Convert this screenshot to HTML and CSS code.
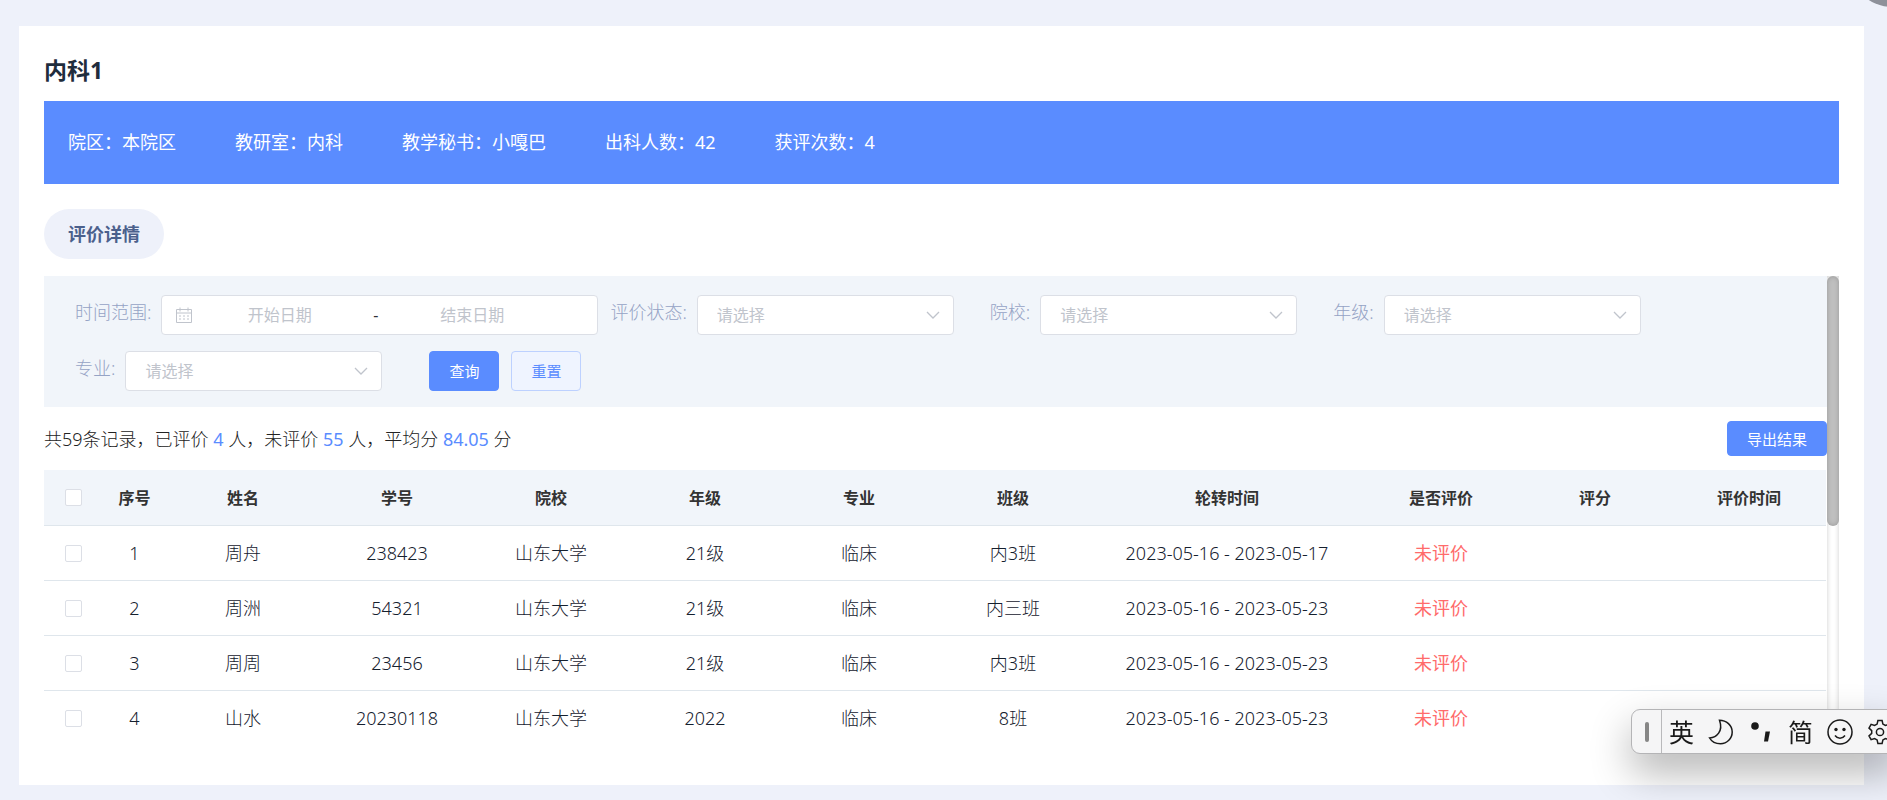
FILE: index.html
```html
<!DOCTYPE html>
<html lang="zh-CN">
<head>
<meta charset="utf-8">
<meta name="viewport" content="width=device-width, initial-scale=1">
<title>内科1</title>
<link rel="stylesheet" href="styles.css">
</head>
<body>
<main class="card">
  <h1 class="title">内科1</h1>
  <section class="banner">
    <span>院区：本院区</span>
    <span>教研室：内科</span>
    <span>教学秘书：小嘎巴</span>
    <span>出科人数：42</span>
    <span>获评次数：4</span>
  </section>
  <button class="tab" type="button">评价详情</button>

  <div class="scroll">
    <div class="scroll-view">
      <form class="filters">
        <div class="field field-range">
          <label for="start">时间范围:</label>
          <div class="range">
            <svg class="icon-date" viewBox="0 0 16 16" aria-hidden="true">
              <path d="M.5 2.5h15v13H.5zM.5 6h15M4 .5v4M12 .5v4"/>
              <path d="M3 9h2M7 9h2M11 9h2M3 12h2M7 12h2M11 12h2"/>
            </svg>
            <input id="start" type="text" placeholder="开始日期">
            <span class="range-sep">-</span>
            <input type="text" placeholder="结束日期" aria-label="结束日期">
          </div>
        </div>
        <div class="field">
          <label for="status">评价状态:</label>
          <div class="select">
            <select id="status"><option>请选择</option></select>
            <svg viewBox="0 0 14 8" aria-hidden="true"><path d="M1 1l6 6 6-6"/></svg>
          </div>
        </div>
        <div class="field">
          <label for="school">院校:</label>
          <div class="select">
            <select id="school"><option>请选择</option></select>
            <svg viewBox="0 0 14 8" aria-hidden="true"><path d="M1 1l6 6 6-6"/></svg>
          </div>
        </div>
        <div class="field">
          <label for="grade">年级:</label>
          <div class="select">
            <select id="grade"><option>请选择</option></select>
            <svg viewBox="0 0 14 8" aria-hidden="true"><path d="M1 1l6 6 6-6"/></svg>
          </div>
        </div>
        <div class="field">
          <label for="major">专业:</label>
          <div class="select">
            <select id="major"><option>请选择</option></select>
            <svg viewBox="0 0 14 8" aria-hidden="true"><path d="M1 1l6 6 6-6"/></svg>
          </div>
        </div>
        <div class="actions">
          <button class="btn btn-primary" type="button">查询</button>
          <button class="btn btn-plain" type="button">重置</button>
        </div>
      </form>

      <div class="summary">
        <p>共59条记录，已评价 <b>4</b> 人，未评价 <b>55</b> 人，平均分 <b>84.05</b> 分</p>
        <button class="btn btn-primary btn-export" type="button">导出结果</button>
      </div>

      <table class="table">
        <colgroup>
          <col class="col-check"><col class="col-index"><col><col><col><col><col><col><col class="col-time"><col><col><col>
        </colgroup>
        <thead>
          <tr><th><input type="checkbox" aria-label="全选"></th><th>序号</th><th>姓名</th><th>学号</th><th>院校</th><th>年级</th><th>专业</th><th>班级</th><th>轮转时间</th><th>是否评价</th><th>评分</th><th>评价时间</th></tr>
        </thead>
        <tbody>
          <tr><td><input type="checkbox" aria-label="选择 1"></td><td>1</td><td>周舟</td><td>238423</td><td>山东大学</td><td>21级</td><td>临床</td><td>内3班</td><td>2023-05-16 - 2023-05-17</td><td class="pending">未评价</td><td></td><td></td></tr>
          <tr><td><input type="checkbox" aria-label="选择 2"></td><td>2</td><td>周洲</td><td>54321</td><td>山东大学</td><td>21级</td><td>临床</td><td>内三班</td><td>2023-05-16 - 2023-05-23</td><td class="pending">未评价</td><td></td><td></td></tr>
          <tr><td><input type="checkbox" aria-label="选择 3"></td><td>3</td><td>周周</td><td>23456</td><td>山东大学</td><td>21级</td><td>临床</td><td>内3班</td><td>2023-05-16 - 2023-05-23</td><td class="pending">未评价</td><td></td><td></td></tr>
          <tr><td><input type="checkbox" aria-label="选择 4"></td><td>4</td><td>山水</td><td>20230118</td><td>山东大学</td><td>2022</td><td>临床</td><td>8班</td><td>2023-05-16 - 2023-05-23</td><td class="pending">未评价</td><td></td><td></td></tr>
        </tbody>
      </table>
    </div>
    <div class="track"><div class="thumb"></div></div>
  </div>
</main>

<div class="corner"></div>

<aside class="ime">
  <div class="ime-grip"><i></i></div>
  <div class="ime-items">
    <span>英</span>
    <svg viewBox="0 0 26 26" aria-hidden="true"><path d="M11.500 1.200C18.500 1.200 24.200 6.500 24.200 13S19 24.800 12.500 24.800C7.800 24.800 3.600 22.500 1.600 19C8.500 18.500 15.500 12.500 11.500 1.200Z"/></svg>
    <svg viewBox="0 0 26 26" aria-hidden="true"><circle class="solid" cx="7" cy="7" r="3.800"/><path class="solid" d="M17.500 12.500h4.500l-2 10h-4z"/></svg>
    <span>简</span>
    <svg viewBox="0 0 26 26" aria-hidden="true"><circle cx="13" cy="13" r="12"/><circle class="solid" cx="9" cy="10.500" r="1.700"/><circle class="solid" cx="17" cy="10.500" r="1.700"/><path d="M8 16.500c2.500 3.500 7.500 3.500 10 0"/></svg>
    <svg viewBox="0 0 26 26" aria-hidden="true"><circle cx="13" cy="13" r="3.600"/><path d="M10.900 1.500h4.200l.8 3.600 2.500 1.400 3.500-1.100 2.100 3.700-2.700 2.500v2.800l2.700 2.500-2.100 3.700-3.500-1.100-2.500 1.400-.8 3.600h-4.200l-.8-3.600-2.500-1.400-3.500 1.100L2 16.900l2.700-2.500v-2.800L2 9.100l2.100-3.700 3.500 1.100 2.500-1.400z"/></svg>
  </div>
</aside>
</body>
</html>
```
FILE: styles.css
```css
* {
  box-sizing: border-box;
}

body {
  margin: 0;
  height: 100vh;
  padding: 26px 23px 15px 19px;
  overflow: hidden;
  background: #eef1fa;
  color: #1f2d3d;
  font: 18px/26px "Noto Sans", "Noto Sans CJK SC", sans-serif;
}

button,
input,
select {
  font: inherit;
}

.card {
  display: flex;
  flex-direction: column;
  height: 100%;
  padding: 24px 25px 42px;
  background: #fff;
}

.title {
  margin: 0 0 11px;
  font-size: 23px;
  line-height: 40px;
}

.banner {
  display: flex;
  gap: 59px;
  padding: 28px 24px;
  background: #5a8cff;
  color: #fff;
  line-height: 27px;
}

.tab {
  align-self: flex-start;
  height: 50px;
  margin: 25px 0 17px;
  padding: 0 24px;
  border: 0;
  border-radius: 25px;
  background: #eef1fa;
  color: #4b608c;
  font-weight: 700;
}

.scroll {
  display: flex;
  flex: 1;
  min-height: 0;
}

.scroll-view {
  flex: 1;
  min-width: 0;
  overflow: hidden;
}

.track {
  width: 12px;
  box-shadow: inset 0 0 5px rgba(0, 0, 0, 0.2);
}

.thumb {
  height: 53.500%;
  border-radius: 6px;
  background: #bfbfbf;
  box-shadow: inset 0 0 5px rgba(0, 0, 0, 0.2);
}

.filters {
  display: flex;
  flex-wrap: wrap;
  row-gap: 16px;
  padding: 19px 31px 16px;
  background: #f1f5fa;
}

.field {
  display: flex;
  align-items: flex-start;
  gap: 10px;
  margin-right: 36px;
}

.field-range {
  margin-right: 12px;
}

.field label {
  color: #95a3c5;
  font-weight: 300;
  line-height: 34px;
}

.range {
  display: flex;
  align-items: center;
  width: 437px;
  height: 40px;
  padding: 0 43px 0 14px;
  border: 1px solid #dcdfe6;
  border-radius: 4px;
  background: #fff;
}

.range input {
  flex: 1;
  min-width: 0;
  padding: 0;
  border: 0;
  background: none;
  font-size: 16px;
  text-align: center;
}

.range input::placeholder {
  color: #c0c4cc;
}

.range-sep {
  width: 28px;
  color: #303133;
  font-size: 16px;
  text-align: center;
}

.icon-date {
  width: 16px;
  height: 16px;
  margin-right: 5px;
  fill: none;
  stroke: #c0c4cc;
}

.select {
  position: relative;
  width: 257px;
}

.select select {
  width: 100%;
  height: 40px;
  padding: 0 40px 0 19px;
  appearance: none;
  border: 1px solid #dcdfe6;
  border-radius: 4px;
  background: #fff;
  color: #c0c4cc;
  font-size: 16px;
}

.select svg {
  position: absolute;
  top: 16px;
  right: 14px;
  width: 14px;
  height: 8px;
  fill: none;
  stroke: #c0c4cc;
  stroke-width: 1.300;
}

.actions {
  display: flex;
  gap: 12px;
  margin-left: 11px;
}

.btn {
  width: 70px;
  height: 40px;
  padding: 0;
  border: 1px solid #5a8cff;
  border-radius: 4px;
  font-size: 15px;
}

.btn-primary {
  background: #5a8cff;
  color: #fff;
}

.btn-plain {
  border-color: #bdd1ff;
  background: #eff4ff;
  color: #5a8cff;
}

.btn-export {
  width: 100px;
  height: 35px;
}

.summary {
  display: flex;
  align-items: center;
  justify-content: space-between;
  height: 63px;
  color: #222;
}

.summary p {
  margin: 0;
  font-weight: 300;
}

.summary b {
  color: #5a8cff;
  font-weight: 400;
}

.table {
  width: calc(100% - 1px);
  border-collapse: separate;
  border-spacing: 0;
  table-layout: fixed;
  text-align: center;
}

.col-check {
  width: 59px;
}

.col-index {
  width: 63px;
}

.col-time {
  width: 274px;
}

.table th,
.table td {
  height: 55px;
  padding: 0;
  border-bottom: 1px solid #dfe6ec;
}

.table td {
  color: #15202e;
  font-weight: 300;
}

.table th {
  height: 56px;
  background: #f1f5fa;
  color: #333;
  font-size: 16px;
}

.table .pending {
  color: #ff6b6b;
  font-weight: 400;
}

.table input {
  display: block;
  width: 17px;
  height: 17px;
  margin: 0 auto;
  appearance: none;
  border: 1px solid #dcdfe6;
  border-radius: 2px;
  background: #fff;
}

.corner {
  position: fixed;
  top: -85px;
  right: -52px;
  width: 92px;
  height: 92px;
  border-radius: 50%;
  background: #8e919a;
}

.ime {
  position: fixed;
  right: -12px;
  bottom: 46px;
  display: flex;
  width: 268px;
  height: 45px;
  border: 1px solid #b4b4b6;
  border-radius: 9px 0 0 9px;
  background: #f5f5f6;
  box-shadow: 0 18px 40px rgba(0, 0, 0, 0.3);
  color: #1a1a1a;
}

.ime-grip {
  display: flex;
  align-items: center;
  justify-content: center;
  width: 30px;
  border-right: 1px solid #b9b9bb;
}

.ime-grip i {
  width: 4px;
  height: 20px;
  border-radius: 2px;
  background: #868686;
}

.ime-items {
  display: flex;
  align-items: center;
  gap: 14px;
  padding-left: 7px;
}

.ime-items span {
  width: 25px;
  font-size: 25px;
  line-height: 40px;
}

.ime-items svg {
  flex: none;
  width: 26px;
  height: 26px;
  fill: none;
  stroke: #1a1a1a;
  stroke-width: 1.500;
}

.ime-items .solid {
  fill: #1a1a1a;
  stroke: none;
}
```
